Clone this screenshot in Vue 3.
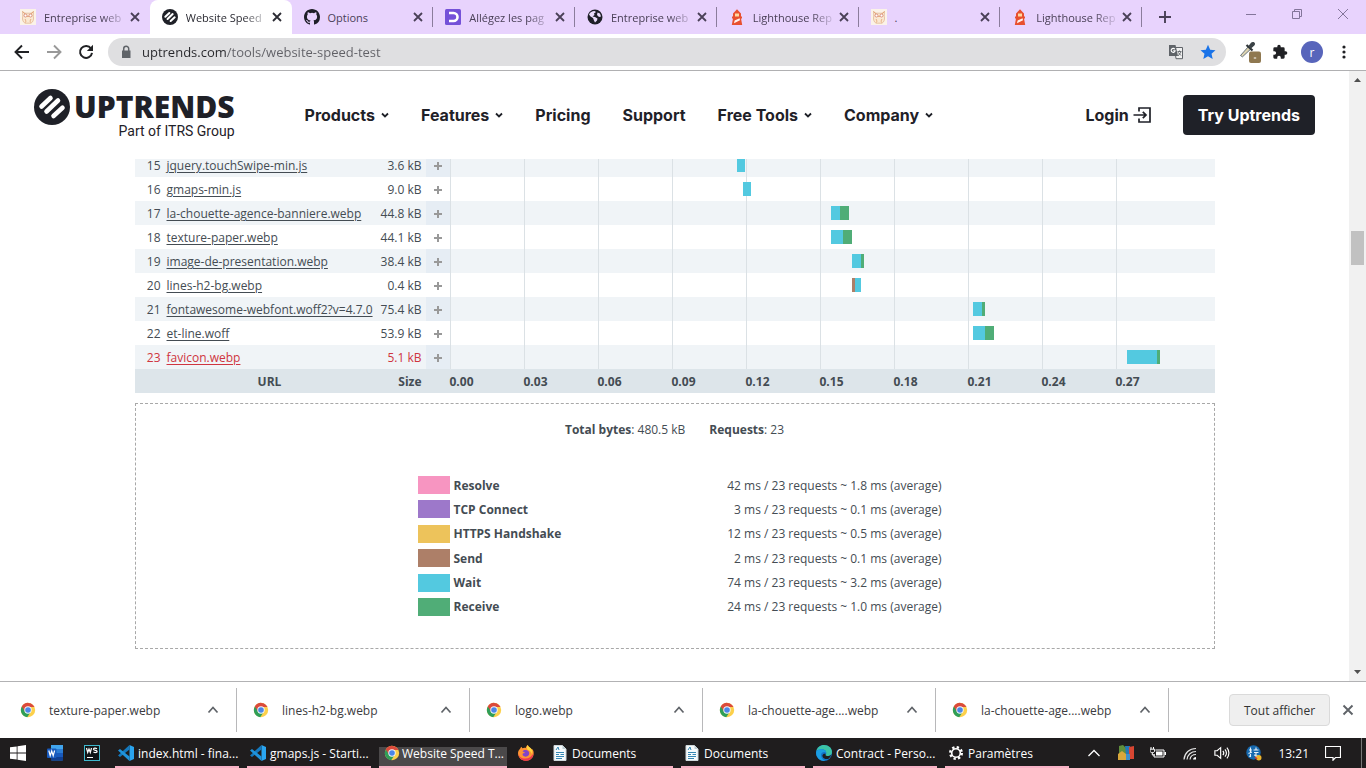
<script setup>
import { ref } from 'vue'

const tabs = [
  { icon: 'owl', title: 'Entreprise web' },
  { icon: 'uptrends', title: 'Website Speed', active: true },
  { icon: 'github', title: 'Options', whole: true },
  { icon: 'dareboost', title: 'Allégez les pag' },
  { icon: 'globe', title: 'Entreprise web' },
  { icon: 'lighthouse', title: 'Lighthouse Rep' },
  { icon: 'owl', title: '.', whole: true },
  { icon: 'lighthouse', title: 'Lighthouse Rep' },
]

const address = ref('uptrends.com/tools/website-speed-test')

const nav = [
  { label: 'Products', menu: true },
  { label: 'Features', menu: true },
  { label: 'Pricing' },
  { label: 'Support' },
  { label: 'Free Tools', menu: true },
  { label: 'Company', menu: true },
]

const requests = [
  { id: 15, url: 'jquery.touchSwipe-min.js', size: '3.6 kB', start: 287, parts: [['wait', 8]] },
  { id: 16, url: 'gmaps-min.js', size: '9.0 kB', start: 293, parts: [['wait', 8]] },
  { id: 17, url: 'la-chouette-agence-banniere.webp', size: '44.8 kB', start: 381, parts: [['wait', 9], ['receive', 9]] },
  { id: 18, url: 'texture-paper.webp', size: '44.1 kB', start: 381, parts: [['wait', 12], ['receive', 9]] },
  { id: 19, url: 'image-de-presentation.webp', size: '38.4 kB', start: 402, parts: [['wait', 9], ['receive', 3]] },
  { id: 20, url: 'lines-h2-bg.webp', size: '0.4 kB', start: 402, parts: [['send', 3], ['wait', 6]] },
  { id: 21, url: 'fontawesome-webfont.woff2?v=4.7.0', size: '75.4 kB', start: 523, parts: [['wait', 9], ['receive', 3]] },
  { id: 22, url: 'et-line.woff', size: '53.9 kB', start: 523, parts: [['wait', 12], ['receive', 9]] },
  { id: 23, url: 'favicon.webp', size: '5.1 kB', start: 677, parts: [['wait', 30], ['receive', 3]], failed: true },
]

const ticks = ['0.00', '0.03', '0.06', '0.09', '0.12', '0.15', '0.18', '0.21', '0.24', '0.27']

const legend = [
  { kind: 'resolve', label: 'Resolve', value: '42 ms / 23 requests ~ 1.8 ms (average)' },
  { kind: 'connect', label: 'TCP Connect', value: '3 ms / 23 requests ~ 0.1 ms (average)' },
  { kind: 'https', label: 'HTTPS Handshake', value: '12 ms / 23 requests ~ 0.5 ms (average)' },
  { kind: 'send', label: 'Send', value: '2 ms / 23 requests ~ 0.1 ms (average)' },
  { kind: 'wait', label: 'Wait', value: '74 ms / 23 requests ~ 3.2 ms (average)' },
  { kind: 'receive', label: 'Receive', value: '24 ms / 23 requests ~ 1.0 ms (average)' },
]

const downloads = [
  'texture-paper.webp',
  'lines-h2-bg.webp',
  'logo.webp',
  'la-chouette-age....webp',
  'la-chouette-age....webp',
]

const pinned = [
  { icon: 'windows', label: 'Démarrer' },
  { icon: 'word', label: 'Word' },
  { icon: 'webstorm', label: 'WebStorm' },
]

const windowsOpen = [
  { icon: 'vscode', label: 'index.html - fina...' },
  { icon: 'vscode', label: 'gmaps.js - Starti...' },
  { icon: 'chrome', label: 'Website Speed T...', active: true },
  { icon: 'firefox' },
  { icon: 'document', label: 'Documents' },
  { icon: 'document', label: 'Documents' },
  { icon: 'edge', label: 'Contract - Perso...' },
  { icon: 'gear', label: 'Paramètres' },
]

const tray = [
  { icon: 'chevron-wide', label: 'Icônes cachées' },
  { icon: 'blocks', label: 'Application' },
  { icon: 'battery', label: 'Batterie' },
  { icon: 'wifi', label: 'Réseau' },
  { icon: 'speaker', label: 'Volume' },
  { icon: 'ime', label: 'Langue' },
]
</script>

<template>
  <svg class="sprite" aria-hidden="true">
    <symbol id="owl" viewBox="0 0 16 16">
      <rect width="16" height="16" fill="#fbf3e8" />
      <path d="M2.500 2.500 5 4.200h6l2.500-1.700-.3 4.500c.8 2.500.2 6-2.200 7.200H5C2.600 13 2 9.500 2.800 7z" fill="#fae9d3" stroke="#dfb08a" stroke-width=".7" />
      <path d="M2.500 2.500 8 8l5.500-5.500M5 10c1 1.500 1 2.500.5 3.500M11 10c-1 1.500-1 2.500-.5 3.500" fill="none" stroke="#dfa070" stroke-width=".8" />
      <circle cx="5.500" cy="6.500" r="1.500" fill="#fff" stroke="#d0705a" stroke-width=".7" />
      <circle cx="10.500" cy="6.500" r="1.500" fill="#fff" stroke="#d0705a" stroke-width=".7" />
    </symbol>
    <symbol id="uptrends" viewBox="0 0 36 36">
      <circle cx="18" cy="18" r="18" fill="#1f2128" />
      <path d="M7.500 17.500 16.500 9M12.500 22.500 24 11.500M19.500 27 28.500 18.800" stroke="#fff" stroke-width="4.600" stroke-linecap="round" />
    </symbol>
    <symbol id="github" viewBox="0 0 16 16">
      <path fill="#1f1f28" d="M8 0C3.580 0 0 3.580 0 8c0 3.540 2.290 6.530 5.470 7.590.4.070.55-.17.55-.38 0-.19-.01-.82-.01-1.490-2.010.37-2.530-.49-2.690-.94-.09-.23-.48-.94-.82-1.130-.28-.15-.68-.52-.01-.53.63-.01 1.080.58 1.230.82.72 1.210 1.870.87 2.330.66.07-.52.28-.87.51-1.070-1.780-.2-3.640-.89-3.640-3.950 0-.87.31-1.590.82-2.150-.08-.2-.36-1.020.08-2.120 0 0 .67-.21 2.200.82a7.600 7.600 0 0 1 4 0c1.530-1.040 2.200-.82 2.200-.82.44 1.100.16 1.920.08 2.120.51.56.82 1.270.82 2.150 0 3.070-1.870 3.750-3.650 3.950.29.25.54.73.54 1.480 0 1.070-.01 1.930-.01 2.200 0 .21.15.46.55.38A8.010 8.010 0 0 0 16 8c0-4.420-3.580-8-8-8z" />
    </symbol>
    <symbol id="dareboost" viewBox="0 0 16 16">
      <rect width="16" height="16" rx="1.500" fill="#7451d8" />
      <path d="M4 4h4.500a4 4 0 0 1 0 8H4" fill="none" stroke="#fff" stroke-width="2.600" />
      <path d="M2.500 8h3" stroke="#7451d8" stroke-width="3" />
    </symbol>
    <symbol id="globe" viewBox="0 0 16 16">
      <circle cx="8" cy="8" r="7.500" fill="#1f1f28" />
      <path d="M2 5.500C3 3.500 5 2 7.500 2l1.500 1-2 1.500.5 1.500-2 1.500 2.500.5 2.500 1.500-.5 2-2 2-1-2-1-2.500-2.500-1.500zM10.500 3.500l2.500 1 1 3-2 .5-2-2z" fill="#eadcfb" />
    </symbol>
    <symbol id="lighthouse" viewBox="0 0 16 16">
      <path d="M4 4.500 8 .3l4 4.200V7.500h1v2h-1l1.200 6.500H2.800L4 9.500H3v-2h1z" fill="#e8502f" />
      <path d="M6 4.500h4v3H6z" fill="#ffd9a0" />
      <path d="m5.600 11.500 5-2.300.4 2-6 3z" fill="#fff3ec" />
    </symbol>
    <symbol id="close" viewBox="0 0 16 16"><path d="m4 4 8 8m0-8-8 8" fill="none" stroke="currentColor" stroke-width="1.800" /></symbol>
    <symbol id="back" viewBox="0 0 16 16"><path d="M15 8H2M8 1.500 1.500 8 8 14.500" fill="none" stroke="currentColor" stroke-width="1.900" /></symbol>
    <symbol id="reload" viewBox="0 0 16 16">
      <path d="M13 4.500A6 6 0 1 0 14 8.800" fill="none" stroke="currentColor" stroke-width="2" />
      <path d="M15 .8v6.200H8.800z" fill="currentColor" />
    </symbol>
    <symbol id="lock" viewBox="0 0 16 16">
      <path d="M4 6.500h8.500V14H4z" fill="#5f6368" />
      <path d="M5.700 7V4.800a2.500 2.500 0 0 1 5 0V7" fill="none" stroke="#5f6368" stroke-width="1.500" />
    </symbol>
    <symbol id="translate" viewBox="0 0 16 16">
      <path d="M6.500 3.500h8v11.200H8z" fill="#f1f1f1" stroke="#5f6368" />
      <path d="M1 1h6.500l2.500 11H1z" fill="#5f6368" />
      <path d="M6.800 5.200a2 2 0 1 0 .3 1.600H5.200" fill="none" stroke="#fff" stroke-width="1.100" />
      <path d="M9.500 7.500h4M11.500 6.500v1M10 8.200l3 3.300M13 8l-3 4" stroke="#5f6368" stroke-width=".9" />
    </symbol>
    <symbol id="star" viewBox="0 0 16 16"><path d="m8 .8 2.200 4.900 5.300.5-4 3.500 1.200 5.300L8 12.200 3.300 15l1.200-5.300-4-3.500 5.300-.5z" fill="#1a73e8" /></symbol>
    <symbol id="pipette" viewBox="0 0 22 22">
      <path d="m1.500 14.500 8-9 2.500 2.300-8.500 8z" fill="#ddd3b0" stroke="#68737b" />
      <path d="m7.500 4 6 5.500" stroke="#30363a" stroke-width="2.200" />
      <path d="m9.500 5 2.500-3.200c1-1.300 4-1 4 .9 0 1-.4 1.600-1.200 2.200L12 7.500z" fill="#3b4246" />
      <rect x="10" y="10.500" width="12" height="11.500" rx="2" fill="#8f7850" />
      <path d="M14.800 17h2.400" stroke="#fff" />
    </symbol>
    <symbol id="puzzle" viewBox="0 0 24 24"><path d="M20.500 11H19V7a2 2 0 0 0-2-2h-4V3.500a2.500 2.500 0 0 0-5 0V5H4a2 2 0 0 0-2 2v3.800h1.500a2.700 2.700 0 0 1 0 5.400H2V20a2 2 0 0 0 2 2h3.800v-1.500a2.700 2.700 0 0 1 5.400 0V22H17a2 2 0 0 0 2-2v-4h1.500a2.500 2.500 0 0 0 0-5z" fill="#202124" /></symbol>
    <symbol id="dots" viewBox="0 0 16 16">
      <circle cx="8" cy="3" r="1.600" fill="#202124" /><circle cx="8" cy="8" r="1.600" fill="#202124" /><circle cx="8" cy="13" r="1.600" fill="#202124" />
    </symbol>
    <symbol id="caret" viewBox="0 0 8 8"><path d="m1 2.500 3 3 3-3" fill="none" stroke="currentColor" stroke-width="1.800" /></symbol>
    <symbol id="login" viewBox="0 0 18 16">
      <path d="M6 4.500V1h11v14H6v-3.500M.5 8H13M9.800 4.800 13 8l-3.200 3.200" fill="none" stroke="currentColor" stroke-width="1.700" />
    </symbol>
    <symbol id="chrome" viewBox="0 0 16 16">
      <circle cx="8" cy="8" r="7.200" fill="#fcd04b" />
      <path d="M8 8 1.800 4.400A7.200 7.200 0 0 0 7.200 15.150L11 9.500z" fill="#2f9e58" />
      <path d="M1.800 4.400A7.200 7.200 0 0 1 14.500 5H8L5 9.500z" fill="#db4a3c" />
      <circle cx="8" cy="8" r="3.700" fill="#f6f6f6" />
      <circle cx="8" cy="8" r="2.800" fill="#4a86e8" />
    </symbol>
    <symbol id="chevron-up" viewBox="0 0 16 16"><path d="m3.500 10.500 4.500-5 4.500 5" fill="none" stroke="#5f6368" stroke-width="1.700" /></symbol>
    <symbol id="windows" viewBox="0 0 16 16"><path d="m0 2.300 6.700-.9v6.200H0zM7.500 1.300 16 0v7.600H7.500zM0 8.400h6.700v6.200L0 13.700zM7.500 8.400H16V16l-8.500-1.200z" fill="#fff" /></symbol>
    <symbol id="word" viewBox="0 0 16 16">
      <rect x="4" y="0" width="12" height="15.500" rx="1" fill="#2b7cd3" />
      <path d="M4 0h12v4H4z" fill="#41a5ee" /><path d="M4 8h12v4H4z" fill="#185abd" /><path d="M4 12h12v3.500H4z" fill="#103f91" />
      <rect y="3.500" width="9.500" height="9.500" rx="1" fill="#185abd" />
      <path d="m1.800 5.500 1.400 5.200L4.700 6l1.500 4.700 1.400-5.200" fill="none" stroke="#fff" stroke-width="1.200" />
    </symbol>
    <symbol id="webstorm" viewBox="0 0 16 16">
      <rect x=".5" y=".5" width="15" height="15" fill="#101517" stroke="#3fb9ce" />
      <path d="m2.500 3 1.200 4.500L5 4l1.300 3.500L7.500 3M13 3.700c-1.500-1-3.500-.7-3.500.5 0 1.600 3.600.7 3.600 2.200 0 1.300-2.200 1.500-3.600.5M3 12.500h6" fill="none" stroke="#fff" stroke-width="1.200" />
    </symbol>
    <symbol id="vscode" viewBox="0 0 16 16">
      <path d="M11.500 0 16 2v12l-4.500 2z" fill="#2aa5f0" />
      <path d="M11.500 0v4.500L2 12 0 10.500z" fill="#1478bd" />
      <path d="M0 5.500 2 4l9.500 7.500V16z" fill="#1f93dc" />
    </symbol>
    <symbol id="firefox" viewBox="0 0 16 16">
      <path d="M2 4c.3-1 .8-1.700 1.500-2.300L4.300 3.300C6 2.500 7 2.600 7.800 3 8 1.800 8.700.7 9.800 0c.2 1.700 3 2.500 4 4.500C14.600 3.800 15 5 15.500 6.500c1 5-2.500 9.200-7.500 9.200S0 12 0 8.200C0 6.500.8 5 2 4z" fill="#ff9433" />
      <path d="M.3 8c.6 4 3 5.500 6.700 5.500 4 0 6.500-2 8.500-5-.2 4.200-3.400 7.300-7.600 7.300C3.500 15.800.4 12.500.3 8z" fill="#f0364f" />
      <path d="M9.800 0c.2 1.700 3 2.500 4 4.500.7 1.600.7 3 .2 4.500C13 7 11.500 5 9.500 4.700 8.600 3.500 8.800 1 9.800 0z" fill="#ffd53e" />
      <path d="M4.500 6.200C5.500 5 7.500 4.500 9 5.300c2.500 1 2.700 3.600 1.600 5-1.400 1.800-4.400 1.700-5.600.2-.7-1-.5-2 .3-2.300l2-.2z" fill="#8244c8" />
    </symbol>
    <symbol id="document" viewBox="0 0 14 16">
      <path d="M1 .5h8.500L13 4v11.500H1z" fill="#f6fafc" stroke="#cfd8dc" />
      <path d="M9.500.5V4H13" fill="#bccbd2" />
      <path d="M3 5 5 2l1 3M3 7.500h8M3 9.500h3M7.500 9.500H11M3 11.500h8M3 13.500h6" fill="none" stroke="#3587b3" />
    </symbol>
    <symbol id="edge" viewBox="0 0 16 16">
      <circle cx="8" cy="8" r="8" fill="#1473c7" />
      <path d="M.3 6C1.300 2.300 4.500 0 8 0c4.600 0 8 3.200 8 7 0 2.500-2 4-4 4-1.500 0-2.400-.4-2.400-1 0-.5.7-.8.700-2C10.300 6 8.500 4.300 6 4.300 3.500 4.300 1.500 5 .3 6z" fill="#3bc3a5" />
      <path d="M.2 6.500C1.500 4.700 3.500 4.200 5.800 4.300 8.500 4.500 10.300 6 10.300 8c-2-2-5.300-.6-5.300 2.200 0 2.500 2 4.700 4.200 5.700C4 16.700-.7 12 .2 6.500z" fill="#1b9de2" />
      <path d="M9.500 10c0 1 3.500 1.700 5.700-.2-.5 1.500-1.200 2.700-2.300 3.700-3.400 1.500-6.900-.5-6.400-3.200.3-1.200 1.500-2 3-1.500z" fill="#1f1d1e" />
    </symbol>
    <symbol id="gear" viewBox="0 0 16 16">
      <circle cx="8" cy="8" r="5.800" fill="none" stroke="#fff" stroke-width="2.400" stroke-dasharray="2.300 2.255" />
      <circle cx="8" cy="8" r="4.300" fill="none" stroke="#fff" stroke-width="1.600" />
    </symbol>
    <symbol id="chevron-wide" viewBox="0 0 16 16"><path d="m2.500 11 5.500-5.500L13.500 11" fill="none" stroke="#fff" stroke-width="1.300" /></symbol>
    <symbol id="blocks" viewBox="0 0 16 16">
      <path d="M1 1 5 0l4 4v6H1z" fill="#5f8f3c" /><path d="M7 1h5l1 8H8z" fill="#2477b8" /><path d="M11 2l5-1v13h-5z" fill="#d84632" />
      <path d="M0 9l4-3 4 3v6H0z" fill="#d8a73b" /><path d="M8 9h4v6H8z" fill="#3e8fca" />
    </symbol>
    <symbol id="battery" viewBox="0 0 16 16">
      <path d="M5.500 5H14v7H4V9" fill="none" stroke="#fff" /><path d="M6 6.500h6.500v4H6zM14.500 7H16v3h-1.500z" fill="#fff" />
      <path d="M1 2v2M3.500 2v2M0 4.200h4.600V6c0 1-1 1.700-2.300 1.700S0 7 0 6zM2.300 7.500V10H5" fill="none" stroke="#fff" />
    </symbol>
    <symbol id="wifi" viewBox="0 0 16 16">
      <path d="M2 14.500C2.500 8 7.500 3.500 14 3.500M5 14.500c.5-4.500 4-8 9-8M8 14.500c.4-3 2.800-5 6-5" fill="none" stroke="#e6e6e6" stroke-width="1.200" />
      <path d="M11 14.500c.2-1.700 1.400-2.600 3-2.600v2.600z" fill="#fff" />
    </symbol>
    <symbol id="speaker" viewBox="0 0 18 16">
      <path d="M1 5.500h2.500L7.500 2v12l-4-3.500H1zM10 5.500c1.200 1.500 1.200 3.500 0 5M12.300 3.800c2 2.500 2 6 0 8.400M14.500 2c3 3.500 3 8.500 0 12" fill="none" stroke="#fff" stroke-width="1.300" />
    </symbol>
    <symbol id="ime" viewBox="0 0 16 16">
      <circle cx="7.500" cy="7.500" r="7.200" fill="#1769ae" />
      <path d="M3 5h3M4.500 2.500v9L3 11M2.500 8.500 6 7M7.500 5h5M10 2.500V5M8 7.500h4.500M10 7.500v5M8 10l4 1" fill="none" stroke="#e9f2f8" stroke-width="1.100" />
      <circle cx="12.800" cy="12.800" r="2.700" fill="#edb52e" /><path d="m9 12 2 2" stroke="#d43b30" stroke-width="1.500" />
    </symbol>
  </svg>

  <div class="screen">
    <header class="tabstrip">
      <nav class="tabs" aria-label="Onglets">
        <div v-for="(tab, i) in tabs" :key="i" class="tab" :class="{ active: tab.active, divided: i > 1 }">
          <svg class="icon16" aria-hidden="true"><use :href="'#' + tab.icon" /></svg>
          <span class="tab-title" :class="{ faded: !tab.whole }">{{ tab.title }}</span>
          <button class="ghost" aria-label="Fermer l'onglet"><svg class="icon16"><use href="#close" /></svg></button>
        </div>
        <button class="ghost new-tab" aria-label="Nouvel onglet">
          <svg class="icon16" viewBox="0 0 16 16"><path d="M2 8h12M8 2v12" stroke="currentColor" stroke-width="1.900" /></svg>
        </button>
      </nav>
      <div class="window-controls">
        <button class="ghost" aria-label="Réduire"><svg class="icon12" viewBox="0 0 12 12"><path d="M1 6.500h10" stroke="currentColor" /></svg></button>
        <button class="ghost" aria-label="Restaurer"><svg class="icon12" viewBox="0 0 12 12"><path d="M1.500 3.500h7v7h-7zM3.500 3.500v-2h7v7h-2" fill="none" stroke="currentColor" /></svg></button>
        <button class="ghost" aria-label="Fermer"><svg class="icon12" viewBox="0 0 12 12"><path d="m1 1 10 10m0-10L1 11" stroke="currentColor" /></svg></button>
      </div>
    </header>

    <div class="toolbar">
      <div class="nav-buttons">
        <button class="ghost" aria-label="Retour"><svg class="icon16"><use href="#back" /></svg></button>
        <button class="ghost forward" aria-label="Avancer"><svg class="icon16"><use href="#back" /></svg></button>
        <button class="ghost" aria-label="Actualiser"><svg class="icon16"><use href="#reload" /></svg></button>
      </div>
      <div class="omnibox">
        <svg class="icon16" aria-hidden="true"><use href="#lock" /></svg>
        <input v-model="address" class="address" type="text" aria-label="Adresse" />
        <button class="ghost" aria-label="Traduire"><svg class="icon16"><use href="#translate" /></svg></button>
        <button class="ghost" aria-label="Favori"><svg class="icon16"><use href="#star" /></svg></button>
      </div>
      <div class="extensions">
        <button class="ghost" aria-label="Pipette"><svg class="icon22"><use href="#pipette" /></svg></button>
        <button class="ghost" aria-label="Extensions"><svg class="icon16"><use href="#puzzle" /></svg></button>
        <button class="avatar" aria-label="Profil">r</button>
        <button class="ghost" aria-label="Menu"><svg class="icon16"><use href="#dots" /></svg></button>
      </div>
    </div>

    <div class="viewport">
      <div class="page">
        <div class="site-header">
          <a class="logo" href="#">
            <svg class="logo-mark" aria-hidden="true"><use href="#uptrends" /></svg>
            <span class="logo-text">
              <span class="brand">UPTRENDS</span>
              <span class="tagline">Part of ITRS Group</span>
            </span>
          </a>
          <nav class="site-nav">
            <a v-for="item in nav" :key="item.label" href="#">
              {{ item.label }}
              <svg v-if="item.menu" class="icon8" aria-hidden="true"><use href="#caret" /></svg>
            </a>
          </nav>
          <div class="account">
            <a class="login" href="#">Login <svg class="login-icon" aria-hidden="true"><use href="#login" /></svg></a>
            <button class="cta">Try Uptrends</button>
          </div>
        </div>

        <main class="report">
          <table class="waterfall">
            <colgroup>
              <col class="col-num" />
              <col class="col-url" />
              <col class="col-size" />
              <col class="col-expand" />
              <col />
            </colgroup>
            <tbody>
              <tr v-for="r in requests" :key="r.id" :class="{ failed: r.failed }">
                <td class="num">{{ r.id }}</td>
                <td class="url"><a href="#">{{ r.url }}</a></td>
                <td class="size">{{ r.size }}</td>
                <td class="expand">
                  <button class="ghost" :aria-label="'Détails ' + r.url">
                    <svg class="plus" viewBox="0 0 10 10"><path d="M1 5h8M5 1v8" stroke="#999" stroke-width="2" /></svg>
                  </button>
                </td>
                <td class="chart">
                  <div class="bar" :style="{ marginLeft: r.start + 'px' }">
                    <span v-for="(p, k) in r.parts" :key="k" :class="p[0]" :style="{ width: p[1] + 'px' }"></span>
                  </div>
                </td>
              </tr>
            </tbody>
            <tfoot>
              <tr>
                <th colspan="2" scope="col" class="url-head">URL</th>
                <th scope="col" class="size">Size</th>
                <th></th>
                <th><div class="ticks"><span v-for="t in ticks" :key="t">{{ t }}</span></div></th>
              </tr>
            </tfoot>
          </table>

          <section class="summary">
            <p class="totals">
              <span><b>Total bytes</b>: 480.5 kB</span>
              <span><b>Requests</b>: 23</span>
            </p>
            <ul class="legend">
              <li v-for="l in legend" :key="l.kind">
                <span class="swatch" :class="l.kind"></span>
                <b>{{ l.label }}</b>
                <span class="value">{{ l.value }}</span>
              </li>
            </ul>
          </section>
        </main>
      </div>
      <div class="scrollbar" aria-hidden="true">
        <svg class="arrow" viewBox="0 0 17 17"><path d="m5 11 3.500-4 3.500 4z" fill="#505050" /></svg>
        <div class="thumb"></div>
        <svg class="arrow" viewBox="0 0 17 17"><path d="m5 6 3.500 4L12 6z" fill="#505050" /></svg>
      </div>
    </div>

    <section class="downloads" aria-label="Téléchargements">
      <div v-for="(d, i) in downloads" :key="i" class="download">
        <svg class="icon16" aria-hidden="true"><use href="#chrome" /></svg>
        <span class="file">{{ d }}</span>
        <button class="ghost" aria-label="Options"><svg class="icon16"><use href="#chevron-up" /></svg></button>
      </div>
      <div class="downloads-end">
        <button class="show-all">Tout afficher</button>
        <button class="ghost" aria-label="Fermer la barre"><svg class="icon16" viewBox="0 0 16 16"><path d="m3.500 3.500 9 9m0-9-9 9" stroke="#5f6368" stroke-width="1.900" /></svg></button>
      </div>
    </section>

    <footer class="taskbar">
      <div class="pinned">
        <button v-for="p in pinned" :key="p.icon" class="ghost" :aria-label="p.label"><svg class="icon16"><use :href="'#' + p.icon" /></svg></button>
      </div>
      <div class="tasks">
        <button v-for="(w, i) in windowsOpen" :key="i" class="task" :class="{ active: w.active, bare: !w.label }" :aria-label="w.label || 'Firefox'">
          <svg class="icon16"><use :href="'#' + w.icon" /></svg>
          <span v-if="w.label">{{ w.label }}</span>
        </button>
      </div>
      <div class="tray">
        <button v-for="t in tray" :key="t.icon" class="ghost" :aria-label="t.label"><svg class="icon16"><use :href="'#' + t.icon" /></svg></button>
        <time class="clock">13:21</time>
        <button class="ghost notifications" aria-label="Notifications"><svg class="icon16" viewBox="0 0 16 16"><path d="M.5 1.500h15v11h-5L8 15.200V12.500H.5z" fill="none" stroke="#fff" stroke-width="1.200" /></svg></button>
        <span class="desktop-edge"></span>
      </div>
    </footer>
  </div>
</template>

<style>
body {
  background: #fff;
}
</style>

<style scoped>
.sprite {
  position: absolute;
  width: 0;
  height: 0;
}
.screen {
  display: flex;
  flex-direction: column;
  height: 100vh;
  font-family: "Open Sans", "Noto Sans", sans-serif;
  font-size: 12px;
  color: #444c53;
  overflow: hidden;
}
button {
  font-family: inherit;
  cursor: pointer;
}
svg {
  display: block;
  flex: none;
}
.icon16 { width: 16px; height: 16px; }
.icon12 { width: 12px; height: 12px; }
.icon22 { width: 22px; height: 22px; }
.icon8 { width: 8px; height: 8px; }
.ghost {
  display: flex;
  align-items: center;
  justify-content: center;
  border: 0;
  padding: 0;
  background: none;
  color: inherit;
}

/* Tabs */
.tabstrip {
  display: flex;
  justify-content: space-between;
  height: 34px;
  flex: none;
  background: #e8d3fd;
  color: #4a4057;
}
.tabs {
  display: flex;
  box-sizing: border-box;
  width: 1188px;
  padding-left: 8px;
}
.tab {
  display: flex;
  align-items: center;
  box-sizing: border-box;
  flex: 1;
  min-width: 0;
  padding: 0 7px 0 12px;
}
.tab.divided { background: linear-gradient(#8b7c9c, #8b7c9c) right center / 1px 20px no-repeat; }
.tab.active {
  background: #fff;
  border-radius: 8px 8px 0 0;
  color: #2b2b33;
}
.tab-title {
  flex: 1;
  min-width: 0;
  margin-left: 8px;
  font-size: 11px;
  white-space: nowrap;
}
.tab-title.faded { mask-image: linear-gradient(to right, #000 58px, transparent 84px); }
.new-tab {
  flex: none;
  width: 46px;
}
.window-controls {
  display: flex;
  height: 28px;
  color: #83759a;
}
.window-controls .ghost { width: 46px; }

/* Toolbar */
.toolbar {
  display: flex;
  align-items: center;
  flex: none;
  height: 36px;
  border-bottom: 1px solid #b0b0b2;
  background: #fff;
  color: #202124;
}
.nav-buttons {
  display: flex;
  gap: 16px;
  padding: 0 14px;
}
.forward {
  color: #999;
  transform: scaleX(-1);
}
.omnibox {
  display: flex;
  align-items: center;
  gap: 16px;
  flex: 1;
  height: 28px;
  padding: 0 10px;
  border-radius: 14px;
  background: #dfdfe1;
}
.address {
  flex: 1;
  min-width: 0;
  margin-left: -8px;
  border: 0;
  padding: 0;
  outline: 0;
  font: 13px "Open Sans", "Noto Sans", sans-serif;
  color: transparent;
  background: linear-gradient(to right, #27272b 84px, #606066 84px);
  background-clip: text;
}
.extensions {
  display: flex;
  align-items: center;
  gap: 11px;
  padding: 0 14px 0 13px;
}
.avatar {
  width: 22px;
  height: 22px;
  margin: 0 2px;
  border: 0;
  border-radius: 50%;
  padding: 0;
  background: #5865bb;
  color: #fff;
  font-size: 12px;
}

/* Page */
.viewport {
  display: flex;
  flex: 1;
  min-height: 0;
}
.page {
  display: flex;
  flex-direction: column;
  flex: 1;
  min-width: 0;
}
.site-header {
  display: flex;
  align-items: center;
  flex: none;
  height: 88px;
  padding: 0 34px;
  font-family: Inter, "Liberation Sans", sans-serif;
  font-size: 16px;
  font-weight: 700;
  color: #1f2128;
}
.site-header a {
  display: flex;
  align-items: center;
  gap: 6px;
  color: inherit;
  text-decoration: none;
}
.site-header .logo {
  align-self: flex-start;
  align-items: flex-start;
  gap: 4px;
  margin-top: 18px;
}
.logo-mark {
  width: 36px;
  height: 36px;
}
.logo-text {
  display: flex;
  flex-direction: column;
  align-items: flex-end;
}
.brand {
  font: 800 30px/36px "Open Sans", "Noto Sans", sans-serif;
}
.tagline {
  font: 400 14px/12px Roboto, sans-serif;
}
.site-nav {
  display: flex;
  gap: 32px;
  margin-left: 70px;
}
.account {
  display: flex;
  align-items: center;
  gap: 32px;
  margin-left: auto;
}
.site-header .login { gap: 4px; }
.login-icon {
  width: 18px;
  height: 16px;
}
.cta {
  height: 40px;
  padding: 0 15px;
  border: 0;
  border-radius: 4px;
  background: #1f2128;
  color: #fff;
  font-size: 16px;
  font-weight: 700;
}
.report {
  flex: 1;
  min-height: 0;
  overflow: hidden;
}
.waterfall {
  width: calc(100% - 32px);
  max-width: 1080px;
  margin: -6px auto 0;
  border-collapse: collapse;
  table-layout: fixed;
}
.col-num { width: 26px; }
.col-url { width: 209px; }
.col-size { width: 56px; }
.col-expand { width: 24px; }
.waterfall td,
.waterfall th {
  box-sizing: border-box;
  height: 24px;
  padding: 2px 0 0;
  line-height: 22px;
  white-space: nowrap;
}
.waterfall tbody tr:nth-child(odd) { background: #f0f4f7; }
.waterfall tbody tr:nth-child(odd) .expand { background: #e6edf4; }
.waterfall tfoot tr { background: #dde5ea; }
.waterfall .num { text-align: right; }
.waterfall .url { padding-left: 6px; }
.waterfall .url-head { padding-left: 35px; }
.url a { color: inherit; text-underline-offset: 2px; }
.waterfall .size {
  padding-right: 4px;
  text-align: right;
}
.expand .ghost {
  width: 24px;
  height: 22px;
}
.plus {
  width: 10px;
  height: 10px;
}
.failed { color: #cf3540; }
.waterfall .chart {
  padding: 0;
  background-image: repeating-linear-gradient(to right, #dbe1e5 0 1px, transparent 1px 74px);
  background-size: 700px 100%;
  background-repeat: no-repeat;
}
.bar {
  display: flex;
  height: 14px;
}
.ticks { display: flex; }
.ticks span {
  width: 74px;
  text-align: left;
}
.wait { background: #53c9e0; }
.receive { background: #50ad77; }
.send { background: #ad7f68; }
.https { background: #edc35b; }
.connect { background: #9d78ca; }
.resolve { background: #f795c1; }
.summary {
  box-sizing: border-box;
  width: calc(100% - 32px);
  max-width: 1080px;
  height: 246px;
  margin: 10px auto 0;
  border: 1px dashed #a8a8a8;
  padding-top: 16px;
}
.totals {
  display: flex;
  justify-content: center;
  gap: 24px;
  margin: 0;
  line-height: 20px;
}
.legend {
  display: flex;
  flex-direction: column;
  justify-content: space-between;
  box-sizing: border-box;
  width: 534px;
  height: 140px;
  margin: 36px auto 0;
  padding: 0 0 0 10px;
  list-style: none;
}
.legend li {
  display: flex;
  align-items: center;
  height: 18px;
}
.swatch {
  width: 32px;
  height: 18px;
  margin-right: 4px;
}
.value { margin-left: auto; }

.scrollbar {
  display: flex;
  flex-direction: column;
  flex: none;
  width: 17px;
  background: #f1f1f1;
}
.arrow {
  width: 17px;
  height: 17px;
}
.thumb {
  height: 34px;
  margin: 143px 2px auto;
  background: #c1c1c1;
}

/* Downloads */
.downloads {
  display: flex;
  align-items: center;
  flex: none;
  height: 56px;
  border-top: 1px solid #b2b2b4;
  background: #fff;
  color: #3b3b40;
}
.download {
  display: flex;
  align-items: center;
  box-sizing: border-box;
  width: 233px;
  height: 44px;
  padding: 0 15px 0 16px;
  border-right: 1px solid #b8b8ba;
}
.download:first-child {
  width: 237px;
  padding-left: 20px;
}
.file {
  flex: 1;
  margin-left: 13px;
  white-space: nowrap;
}
.downloads-end {
  display: flex;
  align-items: center;
  gap: 10px;
  margin-left: auto;
  padding-right: 10px;
}
.show-all {
  width: 101px;
  height: 32px;
  border: 1px solid #dadada;
  border-radius: 4px;
  padding: 0;
  background: #efefef;
  color: #333;
  font-size: 12px;
}

/* Taskbar */
.taskbar {
  display: flex;
  flex: none;
  height: 30px;
  background: #1f1d1e;
  color: #fff;
}
.pinned {
  display: flex;
  gap: 21px;
  padding: 0 15px 0 10px;
}
.tasks {
  display: flex;
  gap: 8px;
}
.task {
  display: flex;
  align-items: center;
  gap: 4px;
  box-sizing: border-box;
  width: 124px;
  border: 0;
  border-bottom: 2px solid #f7b1c5;
  padding: 2px 3px 0;
  background: none;
  color: #fff;
  font-size: 12px;
  white-space: nowrap;
}
.task.active {
  gap: 2px;
  width: 128px;
  background: linear-gradient(transparent 9px, #4b494a 9px);
  padding-left: 5px;
}
.task.bare {
  width: 26px;
  border-bottom-color: transparent;
}
.tray {
  display: flex;
  align-items: center;
  gap: 16px;
  margin-left: auto;
}
.clock { font-size: 12px; }
.notifications { margin-right: 4px; }
.desktop-edge {
  align-self: stretch;
  width: 4px;
  border-left: 1px solid #777;
}
</style>
